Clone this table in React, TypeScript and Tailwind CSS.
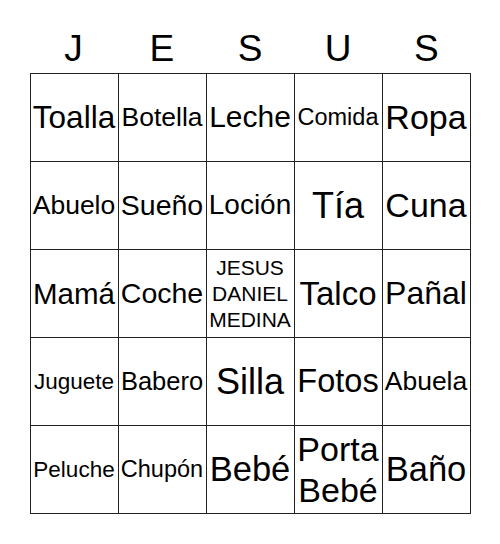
import React from "react";

type Cell = { t: string[]; s: number; lh?: number };

const cells: Cell[] = [
  { t: ["Toalla"], s: 31.5 },
  { t: ["Botella"], s: 26.5 },
  { t: ["Leche"], s: 30 },
  { t: ["Comida"], s: 23.5 },
  { t: ["Ropa"], s: 34 },
  { t: ["Abuelo"], s: 26.5 },
  { t: ["Sueño"], s: 28.5 },
  { t: ["Loción"], s: 28 },
  { t: ["Tía"], s: 36 },
  { t: ["Cuna"], s: 34 },
  { t: ["Mamá"], s: 29.5 },
  { t: ["Coche"], s: 28.5 },
  { t: ["JESUS", "DANIEL", "MEDINA"], s: 21, lh: 26 },
  { t: ["Talco"], s: 33 },
  { t: ["Pañal"], s: 32 },
  { t: ["Juguete"], s: 22.5 },
  { t: ["Babero"], s: 25.5 },
  { t: ["Silla"], s: 36 },
  { t: ["Fotos"], s: 32.5 },
  { t: ["Abuela"], s: 26.5 },
  { t: ["Peluche"], s: 22.5 },
  { t: ["Chupón"], s: 23.5 },
  { t: ["Bebé"], s: 34.5 },
  { t: ["Porta", "Bebé"], s: 34, lh: 41 },
  { t: ["Baño"], s: 34.5 },
];

export default function App() {
  return (
    <div
      className="w-[500px] h-[544px] bg-white text-black flex flex-col items-center"
      style={{ fontFamily: '"Liberation Sans", Arial, sans-serif' }}
    >
      <div className="w-[441px] h-[73px] grid grid-cols-5 pt-[29px]">
        {["J", "E", "S", "U", "S"].map((l, i) => (
          <div key={i} className="text-center text-[37px] leading-[40px]">
            {l}
          </div>
        ))}
      </div>
      <div className="w-[441px] grid grid-cols-5 border-t border-l border-[#222222]">
        {cells.map((c, i) => (
          <div
            key={i}
            className="h-[88px] border-r border-b border-[#222222] flex flex-col items-center justify-center text-center overflow-hidden"
          >
            {c.t.map((line, j) => (
              <div
                key={j}
                className="whitespace-nowrap"
                style={{ fontSize: c.s, lineHeight: c.lh ? `${c.lh}px` : "1.15" }}
              >
                {line}
              </div>
            ))}
          </div>
        ))}
      </div>
    </div>
  );
}
